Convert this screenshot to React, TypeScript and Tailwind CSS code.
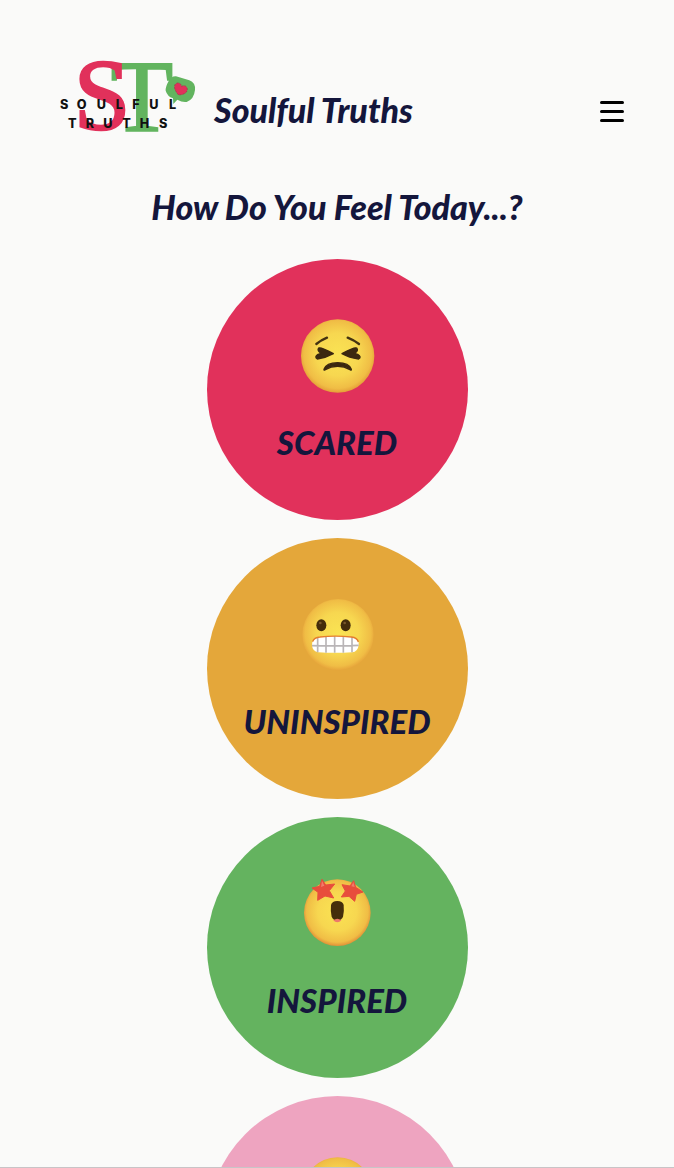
import type { ReactNode } from "react";

function Logo() {
  return (
    <svg viewBox="0 0 480 285" className="h-[95px] w-[160px] shrink-0 overflow-visible" role="img" aria-label="Soulful Truths logo">
      <text x="182" y="243" fontFamily="Liberation Serif, serif" fontSize="306" fill="#62b45f" stroke="#62b45f" strokeWidth="6">T</text>
      <text x="71" y="241" fontFamily="Liberation Serif, serif" fontSize="306" fill="#e1315b" stroke="#e1315b" strokeWidth="7">S</text>
      <g fontFamily="Inter, sans-serif" fontWeight="800" fontSize="38" fill="#111">
        <text x="30 80 140 197 247 298 357" y="178">SOULFUL</text>
        <text x="54 107 160 217 269 327" y="235">TRUTHS</text>
      </g>
      <path d="M378 79 L418 91 Q437 98 435 120 Q432 148 410 156 Q397 158 382 149 L370 162 L369 145 Q352 139 347 122 Q346 111 356 93 Q364 78 378 79Z" fill="#62b45f" />
      <path d="M386 135 C378 126 370 113 375 104 C381 95 393 98 395 109 C405 103 415 112 411 123 C407 132 396 134 386 135Z" fill="#e1315b" stroke="#a13549" strokeWidth="2" strokeDasharray="7 3" />
    </svg>
  );
}

function Face({ id, cx, cy, r, edge, children }: { id: string; cx: number; cy: number; r: number; edge: string; children?: ReactNode }) {
  return (
    <svg viewBox="-8 -1 300 270" className="h-[90px] w-[100px] shrink-0" aria-hidden="true">
      <defs>
        <radialGradient id={id} cx="0.5" cy="0.48" r="0.53">
          <stop offset="0" stopColor="#fae353" />
          <stop offset="0.55" stopColor="#f7d750" />
          <stop offset="0.87" stopColor="#f0bd45" />
          <stop offset="1" stopColor={edge} />
        </radialGradient>
      </defs>
      <circle cx={cx} cy={cy} r={r} fill={`url(#${id})`} />
      {children}
    </svg>
  );
}

function ScaredFace() {
  return (
    <Face id="scared" cx={144} cy={137} r={110} edge="#e39a36">
      <g fill="none" stroke="#443211" strokeWidth="7" strokeLinecap="round">
        <path d="M80 101 Q93 90 112 82" />
        <path d="M174 82 Q194 90 208 101" />
      </g>
      <g fill="#3b2810" stroke="#3b2810" strokeWidth="4" strokeLinejoin="round">
        <path d="M87 113 Q93 109 131 130 Q110 142 83 146 Q73 140 85 132 L95 129 Q81 121 87 113Z" />
        <path d="M201 113 Q195 109 157 130 Q178 142 207 146 Q217 140 204 132 L194 129 Q208 121 201 113Z" />
        <path d="M103 177 Q110 157 144 157 Q178 157 185 177 Q186 181 181 178 Q164 168 144 168 Q124 168 107 178 Q102 181 103 177Z" />
      </g>
    </Face>
  );
}

function UninspiredFace() {
  return (
    <Face id="uninspired" cx={145} cy={136} r={107} edge="#e5a039">
      <g fill="#442c0b">
        <ellipse cx="95" cy="108" rx="15" ry="18" />
        <ellipse cx="168" cy="108" rx="15" ry="18" />
      </g>
      <g fill="#79572c">
        <circle cx="92" cy="101" r="4" />
        <circle cx="165" cy="101" r="4" />
      </g>
      <path d="M88 143 Q137 137 188 143 Q208 147 207 166 Q205 187 187 189 Q137 192 86 189 Q68 186 67 166 Q67 148 88 143Z" fill="#fff" />
      <path d="M84 144V189M109 142V190M135 141V190M161 142V190M187 143V189M67 169Q137 171 207 168" fill="none" stroke="#b9b5b7" strokeWidth="5" />
      <path d="M69 157 Q73 144 91 143 Q137 138 185 143 Q203 145 206 158" fill="none" stroke="#e57e2e" strokeWidth="4" />
    </Face>
  );
}

function InspiredFace() {
  return (
    <Face id="inspired" cx={143} cy={133} r={100} edge="#df8935">
      <path d="M124 110 Q127 98 143 98 Q159 98 162 110 Q164 128 160 145 Q156 156 143 156 Q130 156 126 145 Q122 128 124 110Z" fill="#452e0b" />
      <path d="M131 156 Q143 147 155 156 Q150 162 143 162 Q136 162 131 156Z" fill="#ed796a" />
      <g fill="#e84d3c" stroke="#e84d3c" strokeWidth="3" strokeLinejoin="round">
        <path d="M97 33 L108 50 L135 47 L119 67 L132 89 L106 83 L84 96 L85 72 L67 59 L90 54Z" />
        <path d="M192 37 L198 57 L220 71 L200 78 L195 99 L178 84 L155 86 L167 68 L157 49 L181 53Z" />
      </g>
      <path d="M97 37 L104 52 L94 56Z M191 41 L195 56 L185 54Z" fill="#f17c6b" />
    </Face>
  );
}

function LovedFace() {
  return (
    <Face id="loved" cx={144} cy={138} r={108} edge="#e39a36">
      <path d="M80 105 Q96 80 112 105 M174 105 Q190 80 206 105 M98 165 Q144 206 190 165" fill="none" stroke="#442c0b" strokeWidth="8" strokeLinecap="round" />
    </Face>
  );
}

const moods = [
  { label: "SCARED", color: "bg-[#e1315b]", face: <ScaredFace /> },
  { label: "UNINSPIRED", color: "bg-[#e4a73a]", face: <UninspiredFace /> },
  { label: "INSPIRED", color: "bg-[#64b35f]", face: <InspiredFace /> },
  { label: "LOVED", color: "bg-[#eea4c0]", face: <LovedFace /> },
];

export default function App() {
  return (
    <div className="flex h-screen flex-col overflow-y-auto border-b border-[#c8c4c7] bg-[#fafaf9] font-['Lato',sans-serif] text-[#14163c] [scrollbar-width:none]">
      <header className="flex shrink-0 items-center px-[50px] pt-[50px]">
        <Logo />
        <h1 className="ml-1 pt-6 text-[34px] leading-10 font-black italic">Soulful Truths</h1>
        <button type="button" aria-label="Open menu" className="mt-7 ml-auto flex h-6 w-6 flex-col items-center justify-center gap-[6px]">
          <span className="h-[3px] w-full rounded-full bg-black" />
          <span className="h-[3px] w-full rounded-full bg-black" />
          <span className="h-[3px] w-full rounded-full bg-black" />
        </button>
      </header>
      <main className="flex shrink-0 flex-col items-center px-4 pt-[42px] pb-8">
        <h2 className="text-center text-[34px] leading-10 font-black italic">How Do You Feel Today...?</h2>
        <div className="mt-8 flex flex-col gap-[18px]">
          {moods.map((mood) => (
            <button key={mood.label} type="button" className={`flex size-[261px] flex-col items-center rounded-full pt-[51px] ${mood.color}`}>
              {mood.face}
              <span className="mt-6 text-[33px] leading-9 font-black italic">{mood.label}</span>
            </button>
          ))}
        </div>
      </main>
    </div>
  );
}
